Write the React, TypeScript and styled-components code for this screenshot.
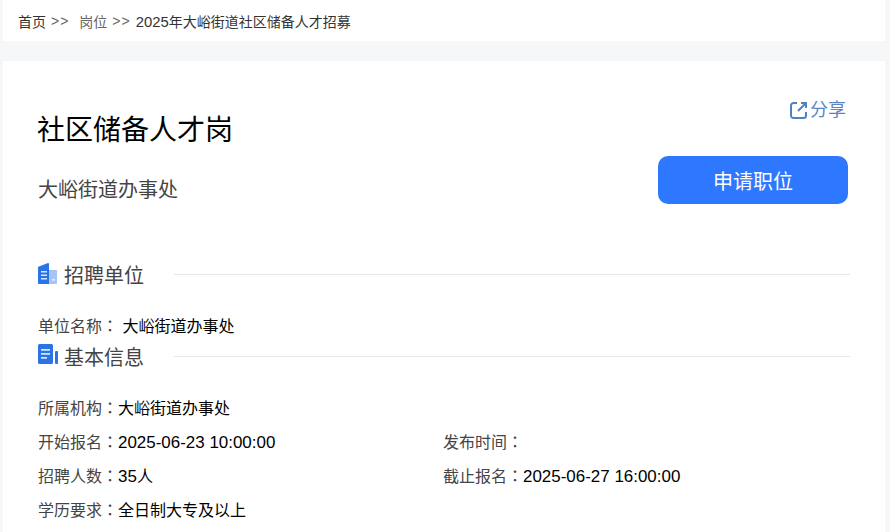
import styled, { createGlobalStyle } from "styled-components";

const GlobalStyle = createGlobalStyle`
  html, body {
    margin: 0;
    padding: 0;
    height: 100%;
    overflow: hidden;
    background: #f5f7f8;
    font-family: "Liberation Sans", "Noto Sans CJK SC", sans-serif;
  }
`;

const Page = styled.div`
  width: 890px;
  height: 532px;
  padding: 0 5px 0 3px;
  box-sizing: border-box;
  overflow: hidden;
`;

const Crumbs = styled.div`
  height: 41px;
  background: #fff;
  display: flex;
  align-items: center;
  padding-left: 15px;
  font-size: 14px;
  color: #333;
`;

const Crumb = styled.span<{ $muted?: boolean }>`
  color: ${(props) => (props.$muted ? "#666" : "#333")};
`;

const Sep = styled.span<{ $tight?: boolean }>`
  color: #666;
  margin: 0 ${(props) => (props.$tight ? "5px" : "10px")} 0 5px;
  letter-spacing: 1px;
`;

const Num = styled.span`
  font-size: 1.06em;
`;

const Card = styled.div`
  margin-top: 20px;
  background: #fff;
  padding: 30px 35px 0;
  height: 471px;
  box-sizing: border-box;
`;

const Head = styled.div`
  display: flex;
  justify-content: space-between;
  height: 169px;
`;

const Title = styled.h1`
  margin: 20px 0 0 -1px;
  font-size: 28px;
  line-height: 40px;
  font-weight: 400;
  color: #000;
`;

const Company = styled.div`
  margin-top: 25px;
  font-size: 20px;
  line-height: 28px;
  color: #444;
`;

const Actions = styled.div`
  display: flex;
  flex-direction: column;
  align-items: flex-end;
  margin-right: 2px;
`;

const Share = styled.a`
  display: flex;
  align-items: center;
  gap: 2px;
  margin: 7px 2px 0 0;
  font-size: 18px;
  line-height: 24px;
  color: #5b85c4;
`;

const ApplyButton = styled.button`
  width: 190px;
  height: 48px;
  margin-top: 34px;
  border: 0;
  border-radius: 10px;
  background: #2e77ff;
  color: #fff;
  font: inherit;
  font-size: 20px;
`;

const SectionHead = styled.div`
  display: flex;
  align-items: center;
  height: 28px;
`;

const SectionIcon = styled.svg`
  width: 20px;
  height: 22px;
  margin: 0 6px 2px 0;
  flex: none;
`;

const SectionTitle = styled.h2`
  margin: 3px 30px 0 0;
  font-size: 20px;
  line-height: 28px;
  font-weight: 400;
  color: #444;
`;

const Rule = styled.div`
  flex: 1;
  height: 1px;
  background: #e6e8ea;
`;

const UnitRow = styled.div`
  margin-top: 24px;
  height: 30px;
  font-size: 16px;
  line-height: 26px;
  color: #000;
`;

const Label = styled.span`
  color: #444;
`;

const Colon = styled.span`
  font-family: "Noto Sans CJK TC", sans-serif;
  color: #444;
`;

const InfoGrid = styled.div`
  display: grid;
  grid-template-columns: 405px 1fr;
  grid-auto-rows: 34px;
  margin-top: 21px;
  font-size: 16px;
  line-height: 32px;
  color: #000;
`;

const FullRow = styled.div`
  grid-column: 1 / -1;
`;

const rows = [
  { label: "开始报名", value: "2025-06-23 10:00:00", unit: "", sideLabel: "发布时间", sideValue: "" },
  { label: "招聘人数", value: "35", unit: "人", sideLabel: "截止报名", sideValue: "2025-06-27 16:00:00" },
];

const App = () => {
  return (
    <Page>
      <GlobalStyle />
      <Crumbs>
        <Crumb>首页</Crumb>
        <Sep>&gt;&gt;</Sep>
        <Crumb $muted>岗位</Crumb>
        <Sep $tight>&gt;&gt;</Sep>
        <Crumb><Num>2025</Num>年大峪街道社区储备人才招募</Crumb>
      </Crumbs>
      <Card>
        <Head>
          <div>
            <Title>社区储备人才岗</Title>
            <Company>大峪街道办事处</Company>
          </div>
          <Actions>
            <Share>
              <svg width="18" height="18" viewBox="0 0 18 18" fill="none" stroke="#4f80c4" strokeWidth="2">
                <path d="M7 2H3.5A2.5 2.5 0 0 0 1 4.5v10A2.5 2.5 0 0 0 3.5 17h10a2.5 2.5 0 0 0 2.5-2.5V11" />
                <path d="M8 10l7-7M11 2h5v5" />
              </svg>
              分享
            </Share>
            <ApplyButton>申请职位</ApplyButton>
          </Actions>
        </Head>
        <SectionHead>
          <SectionIcon viewBox="0 0 20 22">
            <path d="M1 4.5L10 1a1 1 0 0 1 1 1V22H1a1 1 0 0 1-1-1V5.5a1 1 0 0 1 1-1z" fill="#2b74e6" />
            <path d="M11 8h7a1 1 0 0 1 1 1v12a1 1 0 0 1-1 1h-7z" fill="#a6c4f5" />
            <path d="M3 9h6v1.6H3zM3 12.5h6v1.6H3zM3 16h6v1.6H3z" fill="#d5e5fc" />
            <path d="M14 17h3v1.6h-3z" fill="#e4eefc" />
          </SectionIcon>
          <SectionTitle>招聘单位</SectionTitle>
          <Rule />
        </SectionHead>
        <UnitRow>
          <Label>单位名称</Label><Colon>：</Colon> 大峪街道办事处
        </UnitRow>
        <SectionHead>
          <SectionIcon viewBox="0 0 20 22">
            <rect x="0" y="0" width="15" height="20" rx="1.5" fill="#2b74e6" />
            <rect x="17" y="7" width="3" height="13" rx="1" fill="#2b74e6" />
            <path d="M3 5h9v1.7H3zM3 9h9v1.7H3zM3 13h6v1.7H3z" fill="#d5e5fc" />
          </SectionIcon>
          <SectionTitle>基本信息</SectionTitle>
          <Rule />
        </SectionHead>
        <InfoGrid>
          <FullRow>
            <Label>所属机构</Label><Colon>：</Colon>大峪街道办事处
          </FullRow>
          {rows.map((row) => [
            <div key={row.label}>
              <Label>{row.label}</Label><Colon>：</Colon>
              <Num>{row.value}</Num>{row.unit}
            </div>,
            <div key={row.sideLabel}>
              <Label>{row.sideLabel}</Label><Colon>：</Colon>
              <Num>{row.sideValue}</Num>
            </div>,
          ])}
          <FullRow>
            <Label>学历要求</Label><Colon>：</Colon>全日制大专及以上
          </FullRow>
        </InfoGrid>
      </Card>
    </Page>
  );
};

export default App;
